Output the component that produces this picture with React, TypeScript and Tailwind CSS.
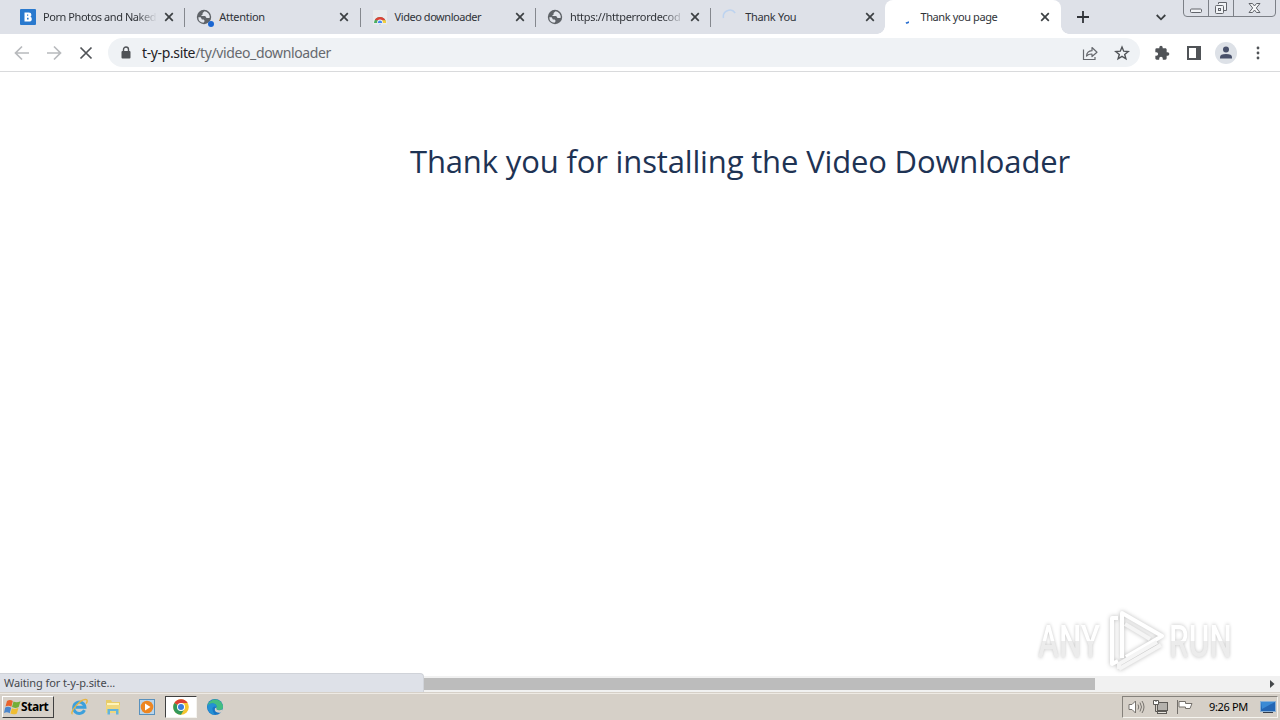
import type { ReactNode } from "react";

type TabInfo = {
  id: string;
  title: string;
  icon: ReactNode;
  active?: boolean;
  fade?: boolean;
  tracking: string;
};

function BlogIcon() {
  return (
    <svg viewBox="0 0 16 16" className="h-4 w-4">
      <rect width="16" height="16" rx="1" fill="#2979ce" />
      <path d="M4.500 3.500h4.300q2.600 0 2.600 2.200q0 1.400-1 2q1.400.6 1.400 2.200q0 2.600-3 2.600H4.500z" fill="#fff" />
      <path d="M7 5.400h1.200v1.400H7zM7 8.800h1.600v1.700H7z" fill="#2979ce" />
    </svg>
  );
}

function GlobeIcon() {
  return (
    <svg viewBox="0 0 16 16" className="h-4 w-4">
      <circle cx="8" cy="8" r="7.2" fill="#5f6368" />
      <path
        d="M8.6 2.3 6.6 4v1.6L4.9 7h4.3l1.3 1.9h3.1A5.8 5.8 0 0 0 8.6 2.3ZM2.3 8.2a5.8 5.8 0 0 0 5.2 5.6l1.2-1.7-1-1.5H5.9L4.7 8.2H2.3Z"
        fill="#e2e5eb"
      />
    </svg>
  );
}

function StoreIcon() {
  return (
    <svg viewBox="0 0 16 16" className="h-4 w-4">
      <rect x="1" y="1" width="14" height="14" rx="1" fill="#e9ebed" />
      <path d="M2 14a6 6 0 0 1 12 0H2Z" fill="#4caf61" />
      <path d="M2.800 11a6 6 0 0 1 10.700.6H8Z" fill="#dc4237" />
      <path d="M8 11.300h5.400q.6 1.300.6 2.700H8Z" fill="#f6ce40" />
      <circle cx="8" cy="13.500" r="2.900" fill="#f4f6fa" />
      <circle cx="8" cy="13.600" r="2.100" fill="#4285f4" />
      <path d="M1 14h14v1.500H1z" fill="#e9ebed" />
    </svg>
  );
}

function CloseIcon() {
  return (
    <svg viewBox="0 0 10 10" className="h-2.5 w-2.5" fill="none" stroke="#3c4043" strokeWidth="1.7">
      <path d="m1.2 1.2 7.6 7.6M8.800 1.2 1.2 8.800" />
    </svg>
  );
}

const TABS: TabInfo[] = [
  { id: "photos", title: "Porn Photos and Naked", icon: <BlogIcon />, fade: true, tracking: "tracking-[-0.44px]" },
  {
    id: "attention",
    title: "Attention",
    icon: (
      <span className="relative block">
        <GlobeIcon />
        <span className="absolute left-3 top-3 h-1.5 w-1.5 rounded-full bg-[#1a66d2]" />
      </span>
    ),
    tracking: "tracking-[-0.3px]",
  },
  { id: "store", title: "Video downloader", icon: <StoreIcon />, tracking: "tracking-[-0.45px]" },
  {
    id: "decoder",
    title: "https://httperrordecod",
    icon: <GlobeIcon />,
    fade: true,
    tracking: "tracking-[-0.3px]",
  },
  {
    id: "thanks",
    title: "Thank You",
    icon: (
      <svg viewBox="0 0 16 16" className="h-4 w-4" fill="none" stroke="#bdd3ef" strokeWidth="1.5">
        <path d="M1.500 9A6.500 6.500 0 0 1 13.200 4" />
      </svg>
    ),
    tracking: "tracking-[-0.3px]",
  },
  {
    id: "page",
    title: "Thank you page",
    icon: (
      <svg viewBox="0 0 16 16" className="h-4 w-4">
        <path d="m8.500 13.500 3.500-1.200v1.600L9.500 15Z" fill="#2a6fd0" />
      </svg>
    ),
    active: true,
    tracking: "tracking-[-0.4px]",
  },
];

function Tab({ tab }: { tab: TabInfo }) {
  return (
    <div
      className={`relative flex h-[34px] w-[175.3px] shrink-0 items-center pl-3 first:pl-[11px] ${
        tab.active ? "rounded-t-lg bg-white" : ""
      }`}
    >
      {tab.active && (
        <>
          <span className="absolute bottom-0 -left-2 h-2 w-2 bg-[radial-gradient(circle_at_0_0,transparent_7.5px,white_8px)]" />
          <span className="absolute bottom-0 -right-2 h-2 w-2 bg-[radial-gradient(circle_at_100%_0,transparent_7.5px,white_8px)]" />
        </>
      )}
      <span className="mr-[7px] shrink-0">{tab.icon}</span>
      <span
        className={`w-[114px] whitespace-nowrap text-[11px] leading-4 text-[#303338] ${tab.tracking} ${
          tab.fade ? "[mask-image:linear-gradient(to_right,black_82%,transparent)]" : ""
        }`}
      >
        {tab.title}
      </span>
      <span className="ml-auto mr-[10.3px]">
        <CloseIcon />
      </span>
      {!tab.active && tab.id !== "thanks" && <span className="absolute -right-px top-2 h-[19px] w-px bg-[#85888e]" />}
    </div>
  );
}

function WindowControls() {
  return (
    <svg viewBox="0 0 97 17" className="h-[17px] w-[97px]" fill="none" stroke="#62656b">
      <path d="M.5 0v13q0 3.500 3.500 3.500h85q3.500 0 3.500-3.500V0M25.500 0v16M50.500 0v16" stroke="#7c8087" />
      <rect x="7.500" y="9" width="11" height="3.500" rx="1" fill="#f1f3f6" />
      <path d="M35.500 4V2.500h8v8H41" fill="#f1f3f6" />
      <rect x="32.500" y="5.500" width="8" height="8" rx="1" fill="#f1f3f6" />
      <rect x="35.500" y="8.500" width="2" height="2" />
      <path d="M66 3.500h3.500l2 2.500 2-2.500H77l-3.700 4.500 3.700 4.500h-3.500l-2-2.500-2 2.500H66l3.700-4.500Z" fill="#f5f6f8" />
    </svg>
  );
}

function TabStrip() {
  return (
    <header className="flex h-[34px] shrink-0 bg-[#dee1e8] pl-[9px]">
      {TABS.map((tab) => (
        <Tab key={tab.id} tab={tab} />
      ))}
      <svg viewBox="0 0 12 12" className="ml-[16.2px] mt-[11px] h-3 w-3 shrink-0" stroke="#303338" strokeWidth="1.8">
        <path d="M6 0v12M0 6h12" />
      </svg>
      <svg
        viewBox="0 0 10 7"
        className="ml-[67px] mt-[14px] h-[7px] w-2.5 shrink-0"
        fill="none"
        stroke="#3c4043"
        strokeWidth="1.8"
      >
        <path d="m.7 1 4.300 4.300L9.300 1" />
      </svg>
      <div className="ml-[17px] shrink-0">
        <WindowControls />
      </div>
    </header>
  );
}

function Toolbar() {
  return (
    <div className="flex h-[38px] shrink-0 items-center border-b border-[#d9dadc] bg-white pl-3.5">
      <svg viewBox="0 0 16 16" className="h-4 w-4" fill="none" stroke="#b8babd" strokeWidth="1.7">
        <path d="M15 8H2M8 1.500 1.500 8 8 14.500" />
      </svg>
      <svg viewBox="0 0 16 16" className="ml-4 h-4 w-4" fill="none" stroke="#b8babd" strokeWidth="1.7">
        <path d="M1 8h13M8 1.500 14.500 8 8 14.500" />
      </svg>
      <svg viewBox="0 0 16 16" className="ml-4 h-4 w-4" fill="none" stroke="#505357" strokeWidth="1.7">
        <path d="m2.500 2.500 11 11M13.500 2.500l-11 11" />
      </svg>
      <div className="ml-3.5 flex h-[29px] w-[1032px] items-center rounded-full bg-[#eff2f5] pl-3">
        <svg viewBox="0 0 12 14" className="h-3.5 w-3">
          <path d="M3.500 6V3.500a2.500 2.500 0 0 1 5 0V6" fill="none" stroke="#505357" strokeWidth="1.400" />
          <rect x="1.500" y="5" width="9" height="7.500" rx="1" fill="#505357" />
        </svg>
        <span className="ml-2.5 w-[932px] whitespace-nowrap text-sm leading-5 tracking-[-0.37px] text-[#66696e]">
          <span className="text-[#1f2124]">t-y-p.site</span>/ty/video_downloader
        </span>
        <svg viewBox="0 0 16 16" className="ml-2 h-4 w-4" fill="none" stroke="#66696e" strokeWidth="1.200">
          <path d="M1.500 4.500v10h11.500V12" />
          <path d="M4.500 11q.4-5 5.500-5.300V2.500l5 4.700-5 4.300V9q-3.500-.2-5.500 2Z" strokeLinejoin="round" />
        </svg>
        <svg viewBox="0 0 16 16" className="ml-4 h-4 w-4" fill="none" stroke="#505357" strokeWidth="1.400">
          <path d="m8 2 1.700 4.200 4.500.3-3.500 2.900 1.200 4.400L8 11.300l-3.900 2.500 1.200-4.400-3.500-2.900 4.500-.3Z" />
        </svg>
      </div>
      <svg viewBox="0 0 24 24" className="ml-3.5 h-4 w-4" fill="#505357">
        <path d="M20.500 11H19V7c0-1.100-.9-2-2-2h-4V3.500a2.500 2.500 0 0 0-5 0V5H4a2 2 0 0 0-2 2v3.800h1.500a2.700 2.700 0 0 1 0 5.400H2V20c0 1.100.9 2 2 2h3.800v-1.500a2.700 2.700 0 0 1 5.400 0V22H17a2 2 0 0 0 2-2v-4h1.500a2.500 2.500 0 0 0 0-5Z" />
      </svg>
      <svg viewBox="0 0 14 14" className="ml-[17px] h-3.5 w-3.5">
        <path d="M0 0h14v14H0zM2 2v10h7V2z" fill="#505357" fillRule="evenodd" />
      </svg>
      <svg viewBox="0 0 22 22" className="ml-3.5 h-[22px] w-[22px]">
        <circle cx="11" cy="11" r="11" fill="#dde1e7" />
        <circle cx="11" cy="7.500" r="3" fill="#48506a" />
        <path d="M5 16.500v-1.300q0-3.200 6-3.200t6 3.200v1.300Z" fill="#48506a" />
      </svg>
      <svg viewBox="0 0 4 14" className="ml-[19px] h-3.5 w-1" fill="#505357">
        <circle cx="2" cy="2" r="1.400" />
        <circle cx="2" cy="7" r="1.400" />
        <circle cx="2" cy="12" r="1.400" />
      </svg>
    </div>
  );
}

function WatermarkWord({ children }: { children: ReactNode }) {
  return (
    <span className="-mr-8 w-[98px] shrink-0 origin-left scale-x-[0.7] bg-gradient-to-b from-white from-50% to-[#ececec] to-50% bg-clip-text font-['Roboto'] font-medium text-transparent drop-shadow-[0_0_2px_#c4c4c4]">
      {children}
    </span>
  );
}

function Watermark() {
  return (
    <div className="absolute left-[1038px] top-[608px] flex h-[66px] w-[196px] items-center text-[45px] leading-none">
      <WatermarkWord>ANY</WatermarkWord>
      <svg
        viewBox="0 0 62 66"
        className="mr-[3px] h-[66px] w-[62px] shrink-0 drop-shadow-[0_0_2px_#bdbdbd]"
        fill="none"
        stroke="#fff"
        strokeWidth="4"
        strokeLinejoin="round"
      >
        <path d="M18 50V5l40 23-36 21" />
        <path d="M14 10H8v46l6-3" />
        <path d="M15 61l42-24M21 16l25 15M15 61v-5l38-22" stroke="#f5f5f5" />
      </svg>
      <WatermarkWord>RUN</WatermarkWord>
    </div>
  );
}

function PageScrollbar() {
  return (
    <div className="flex h-4 w-full items-center bg-[#f1f1f1]">
      <div className="ml-[424px] h-3 w-[671px] bg-[#bcbcbc]" />
      <svg viewBox="0 0 6 8" className="ml-[174px] h-2 w-1.5" fill="#45484b">
        <path d="m1 0 4.500 4L1 8Z" />
      </svg>
    </div>
  );
}

function WindowsFlag() {
  return (
    <svg viewBox="0 0 17 16" className="h-4 w-[17px]">
      <path d="M3 2q3-2 5.800 0L7.400 7.700Q4.500 6 1.500 7.500Z" fill="#e9632c" />
      <path d="M9.500 2.500q3 1.600 7-.2L14.700 8q-3.500 1.700-6.700.1Z" fill="#74ae38" />
      <path d="M1.200 8.400q3-1.500 6 .3l-1.500 5.600q-2.800-1.800-5.700-.2Z" fill="#4b86cc" />
      <path d="M7.900 9.200q3 1.500 6.500-.1l-1.500 5.300q-3.200 1.700-6.500.1Z" fill="#f0bd31" />
    </svg>
  );
}

function ChromeIcon() {
  return (
    <svg viewBox="0 0 16 16" className="h-4 w-4">
      <circle cx="8" cy="8" r="7.800" fill="#f5c52f" />
      <path d="M8 8 1.250 4.100A7.800 7.800 0 0 1 14.750 4.100H8Z" fill="#dc4034" />
      <path d="M1.250 4.100A7.800 7.800 0 0 0 8 15.800L11.400 10 8 8Z" fill="#33985a" />
      <circle cx="8" cy="8" r="4" fill="#fff" />
      <circle cx="8" cy="8" r="3" fill="#397ddd" />
    </svg>
  );
}

function QuickLaunch() {
  return (
    <>
      <svg viewBox="0 0 18 18" className="ml-4 h-[18px] w-[18px]" fill="none">
        <path d="M14.500 12.200A5.700 5.700 0 1 1 15 9.300H5.500" stroke="#3da0dc" strokeWidth="2.900" />
        <path d="M2.500 16C-1 15 11-.500 16.500 1.700q1.500 1-.4 4" stroke="#e7b542" strokeWidth="1.400" />
      </svg>
      <svg viewBox="0 0 18 18" className="ml-4 h-[18px] w-[18px]">
        <path d="M2 2h5l1 2h8v10H2Z" fill="#e8cc68" />
        <path d="M3 5h12v4H3Z" fill="#fff4b8" />
        <path d="M2 7h14v8H2Z" fill="#efd77e" />
        <path d="M3.500 16.500V11h11v5.500H12V13H6v3.500Z" fill="#62b4dc" />
      </svg>
      <svg viewBox="0 0 18 18" className="ml-4 h-[18px] w-[18px]">
        <rect x="1.500" y="1.500" width="15" height="15" fill="#b9d5ec" stroke="#5991bd" />
        <circle cx="9" cy="9" r="6.300" fill="#ed8622" />
        <path d="m7 5.500 5.500 3.500L7 12.500Z" fill="#fff" />
      </svg>
      <div className="ml-[9px] flex h-[22px] w-8 items-center justify-center border border-b-[#f5f3ee] border-l-[#404040] border-r-[#f5f3ee] border-t-[#404040] bg-white">
        <ChromeIcon />
      </div>
      <svg viewBox="0 0 18 18" className="ml-[9px] h-[18px] w-[18px]">
        <circle cx="9" cy="9" r="8" fill="#1975c5" />
        <path d="M1.500 8C3-.500 15-1 17 8q.4 4-4 4-4 0-2.500-2.500C11.500 5 4 4 1.500 8Z" fill="#43bd82" />
        <path d="M1.500 8C4 3.500 11 5 10.500 9q-3-1.500-4 1-.5 3 2.500 6.900A8 8 0 0 1 1.500 8Z" fill="#2491d5" />
        <path d="M10.500 9.500q-1 2.500 2.500 2.700 2 .1 3.500-1v2l-2 1.500q-5 .5-5.700-2.700Q8.400 9.800 10.500 9.500Z" fill="#d6d0c8" />
      </svg>
    </>
  );
}

function SystemTray() {
  return (
    <div className="ml-auto mr-0.5 flex h-[22px] w-[156px] items-center border border-b-[#f5f3ee] border-l-[#85817b] border-r-[#f5f3ee] border-t-[#85817b] pl-[5px]">
      <svg viewBox="0 0 17 16" className="h-4 w-[17px]" fill="none" stroke="#77736e">
        <path d="M1 5.500h3L7.500 2v12L4 10.500H1Z" fill="#fff" />
        <path d="M10 5.500q1.500 2.500 0 5M12 3.500q3 4.500 0 9M14 2q4 6 0 12" />
      </svg>
      <svg viewBox="0 0 16 16" className="ml-[7px] h-4 w-4" fill="none" stroke="#5d5a56">
        <rect x="5.500" y="3.500" width="10" height="8" fill="#b4b1ac" />
        <rect x="5.500" y="12.500" width="9" height="2" fill="#e5e2dc" />
        <path d="M1.500 1.500h5v4h-5zM4 1v2" fill="#fff" />
        <path d="M3.500 5.500v7h2" />
      </svg>
      <svg viewBox="0 0 17 16" className="ml-2 h-4 w-[17px]" fill="#fff" stroke="#74706b">
        <path d="M1.500 1v14" />
        <path d="M3 2.500h6.500v2H16L14 9.500H9.500V8H3Z" />
      </svg>
      <span className="ml-4 w-11 whitespace-nowrap text-[11px] leading-4 tracking-[-0.35px] text-black">9:26 PM</span>
      <svg viewBox="0 0 16 14" className="ml-[7px] h-3.5 w-4">
        <rect x=".5" y="1.500" width="15" height="10" fill="#2466b4" stroke="#8ab0d5" />
        <path d="M1 2h14L2 9Z" fill="#3a8ad5" />
        <path d="M3 12.500h10" stroke="#343b48" />
      </svg>
    </div>
  );
}

function Taskbar() {
  return (
    <footer className="flex h-[27px] shrink-0 items-center border-t border-[#eeeae4] bg-[#d6d0c8] pl-0.5">
      <button
        type="button"
        className="flex h-[22px] w-[52px] items-center border border-b-[#404040] border-l-white border-r-[#404040] border-t-white pl-px text-[12px] font-bold tracking-[-0.45px] text-black"
      >
        <WindowsFlag />
        <span>Start</span>
      </button>
      <QuickLaunch />
      <SystemTray />
    </footer>
  );
}

export default function App() {
  return (
    <div className="relative flex h-[720px] w-[1280px] flex-col overflow-hidden bg-white font-['Noto_Sans','Open_Sans',sans-serif]">
      <TabStrip />
      <Toolbar />
      <main className="flex min-h-0 flex-1 flex-col">
        <h1 className="ml-[410px] mt-[65px] whitespace-nowrap font-['Open_Sans',sans-serif] text-[31px] leading-[48px] tracking-[-0.15px] text-[#1e3354]">
          Thank you for installing the Video Downloader
        </h1>
        <div className="mt-auto">
          <PageScrollbar />
        </div>
      </main>
      <div className="h-px shrink-0 bg-[#d6d0c8]" />
      <Taskbar />
      <div className="absolute left-0 top-[673px] flex h-[19px] w-[424px] items-center rounded-tr border-r border-t border-[#d0d3d9] bg-[#dee1e8] pl-1 text-[11px] tracking-[-0.1px] text-[#45484d]">
        Waiting for t-y-p.site...
      </div>
      <Watermark />
    </div>
  );
}
